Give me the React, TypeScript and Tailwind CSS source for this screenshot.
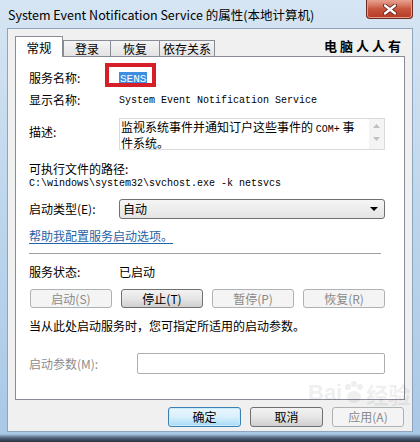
import React from "react";

const cjk = { fontFamily: '"Noto Sans CJK SC", "Noto Sans", sans-serif' };
const mono = { fontFamily: '"Liberation Mono", "Noto Sans CJK SC", monospace' };

function Tab({ label, active, w }: { label: string; active?: boolean; w: string }) {
  if (active) {
    return (
      <div
        className={`relative z-10 -mb-px flex h-[21px] ${w} items-start justify-center border border-b-0 border-[#898c95] bg-white pt-[2px] text-[12.5px] text-black`}
      >
        {label}
      </div>
    );
  }
  return (
    <div
      className={`-ml-px flex h-[16px] ${w} items-center justify-center border border-b-0 border-[#898c95] bg-gradient-to-b from-[#f5f5f5] to-[#e3e3e3] text-[12px] text-black first:ml-0`}
    >
      {label}
    </div>
  );
}

function Btn({
  children,
  disabled,
  primary,
  className = "",
}: {
  children: React.ReactNode;
  disabled?: boolean;
  primary?: boolean;
  className?: string;
}) {
  const base =
    "flex items-center justify-center rounded-[3px] border text-[12px] leading-none";
  const look = disabled
    ? "border-[#adb2b5] bg-[#f4f4f4] text-[#8a8a8a]"
    : primary
    ? "border-[#3c7fb1] bg-gradient-to-b from-[#eaf6fd] via-[#d9f0fc] to-[#a7d9f5] text-black shadow-[inset_0_0_0_1px_#c8ecfc]"
    : "border-[#707070] bg-gradient-to-b from-[#f2f2f2] via-[#e6e6e6] to-[#cfcfcf] text-black";
  return <div className={`${base} ${look} ${className}`}>{children}</div>;
}

export default function App() {
  return (
    <div
      className="relative flex h-[442px] w-[420px] flex-col overflow-hidden bg-gradient-to-b from-[#d6e5f3] via-[#bcd5ec] to-[#a9c8e6]"
      style={cjk}
    >
      {/* title bar */}
      <div className="flex h-[28px] items-start pl-[8px] pr-[7px]">
        <div className="mt-[7px] text-[12.5px] leading-[16px] text-black">
          System Event Notification Service 的属性(本地计算机)
        </div>
        <div className="ml-auto flex h-[19px] w-[47px] items-center justify-center rounded-b-[4px] border border-t-0 border-[#6b2a22] bg-gradient-to-b from-[#e8a493] via-[#c8553e] to-[#b53a22] shadow-[inset_0_0_0_1px_#e79c8a]">
          <svg width="14" height="11" viewBox="0 0 14 11">
            <path
              d="M2 1.5 L12 9.5 M12 1.5 L2 9.5"
              stroke="#5a1a10"
              strokeWidth="4"
              strokeLinecap="round"
            />
            <path
              d="M2 1.5 L12 9.5 M12 1.5 L2 9.5"
              stroke="#ffffff"
              strokeWidth="2.4"
              strokeLinecap="round"
            />
          </svg>
        </div>
      </div>

      {/* client area */}
      <div className="relative mx-[7px] flex h-[404px] flex-col border border-[#8ea4bd] bg-[#f0f0f0]">
        {/* tabs */}
        <div className="flex h-[27px] items-end pl-[7px] pr-[8px] pt-[7px]">
          <Tab label="常规" active w="w-[48px]" />
          <div className="flex items-end">
            <Tab label="登录" w="w-[48px]" />
            <Tab label="恢复" w="w-[50px]" />
            <Tab label="依存关系" w="w-[56px]" />
          </div>
          <div className="mb-[1px] ml-auto self-center text-[13px] font-bold tracking-[3px] text-black">
            电脑人人有
          </div>
        </div>

        {/* panel */}
        <div className="mx-[7px] flex h-[344px] w-[390px] flex-col border border-[#898c95] bg-white px-[13px] pt-[9px] text-[12px] text-black">
          <div className="flex h-[24px] items-center">
            <div className="w-[90px]">服务名称:</div>
            <div className="relative">
              <span className="bg-[#3d8ee0] px-[1px] py-[1px] text-[11px] text-white" style={mono}>
                SENS
              </span>
              <div className="absolute -left-[14px] -top-[5px] h-[24px] w-[51px] border-[4px] border-[#d5202a]" />
            </div>
          </div>

          <div className="flex h-[20px] items-center">
            <div className="w-[90px]">显示名称:</div>
            <div className="text-[10px]" style={mono}>
              System Event Notification Service
            </div>
          </div>

          <div className="mt-[8px] flex h-[32px] items-start">
            <div className="mt-[5px] w-[90px]">描述:</div>
            <div className="flex h-[32px] w-[266px] border border-[#dadada]">
              <div className="flex-1 pl-[1px] pt-[1px] text-[12px] leading-[13px]">
                监视系统事件并通知订户这些事件的 <span style={mono} className="text-[10px]">COM+</span> 事
                <br />
                件系统。
              </div>
              <div className="flex w-[15px] flex-col items-center bg-[#f4f4f4] pt-[5px]">
                <svg width="7" height="4" viewBox="0 0 7 4">
                  <path d="M0 4 L3.5 0 L7 4 Z" fill="#c0c0c0" />
                </svg>
                <svg className="mt-[9px]" width="7" height="4" viewBox="0 0 7 4">
                  <path d="M0 0 L3.5 4 L7 0 Z" fill="#c0c0c0" />
                </svg>
              </div>
            </div>
          </div>

          <div className="mt-[11px] flex h-[16px] items-center">可执行文件的路径:</div>
          <div className="flex h-[12px] items-center text-[10px]" style={mono}>
            C:\windows\system32\svchost.exe -k netsvcs
          </div>

          <div className="mt-[10px] flex h-[20px] items-center">
            <div className="w-[90px]">启动类型(E):</div>
            <div className="flex h-[20px] w-[266px] items-center rounded-[3px] border border-[#707070] bg-gradient-to-b from-[#f5f5f5] to-[#e4e4e4] pl-[3px] pr-[6px]">
              <span>自动</span>
              <svg className="ml-auto" width="8" height="4" viewBox="0 0 8 4">
                <path d="M0 0 L8 0 L4 4 Z" fill="#000" />
              </svg>
            </div>
          </div>

          <div className="mt-[9px] flex h-[16px] items-center">
            <span className="text-[#1e64a8] underline decoration-[#1e64a8] underline-offset-2">
              帮助我配置服务启动选项。
            </span>
          </div>

          <div className="mt-[9px] h-px w-[352px] bg-[#a0a0a0]" />

          <div className="mt-[10px] flex h-[16px] items-center">
            <div className="w-[90px]">服务状态:</div>
            <div>已启动</div>
          </div>

          <div className="ml-[1px] mt-[9px] grid h-[19px] w-[355px] grid-cols-4 gap-[9px]">
            <Btn disabled>启动(S)</Btn>
            <Btn>停止(T)</Btn>
            <Btn disabled>暂停(P)</Btn>
            <Btn disabled>恢复(R)</Btn>
          </div>

          <div className="mt-[10px] flex h-[16px] items-center">
            当从此处启动服务时，您可指定所适用的启动参数。
          </div>

          <div className="mt-[19px] flex h-[21px] items-center">
            <div className="w-[108px] text-[#8d8d8d]">启动参数(M):</div>
            <div className="h-[21px] w-[248px] rounded-[2px] border border-[#abadb3] bg-white" />
          </div>
        </div>

        {/* dialog buttons */}
        <div className="mt-[7px] flex justify-end gap-[9px] pr-[8px]">
          <Btn primary className="h-[20px] w-[73px]">
            确定
          </Btn>
          <Btn className="h-[20px] w-[73px]">取消</Btn>
          <Btn disabled className="h-[20px] w-[72px]">
            应用(A)
          </Btn>
        </div>

        {/* baidu watermark */}
        <div className="pointer-events-none absolute left-[300px] top-[352px] flex items-center text-[22px] font-bold leading-none text-[#000] opacity-[0.06]">
          <span style={{ fontFamily: '"Liberation Sans", sans-serif' }}>Bai</span>
          <svg width="22" height="24" viewBox="0 0 22 24" className="mx-[1px]">
            <circle cx="5" cy="6" r="3" fill="#000" />
            <circle cx="11" cy="3" r="3" fill="#000" />
            <circle cx="17" cy="6" r="3" fill="#000" />
            <ellipse cx="11" cy="16" rx="7" ry="6" fill="#000" />
          </svg>
          <span>经验</span>
        </div>
      </div>

      {/* bottom frame edge */}
      <div className="mt-[2px] h-[8px] bg-gradient-to-b from-[#a9c8e6] via-[#4f6279] to-[#27323f]" />
    </div>
  );
}
